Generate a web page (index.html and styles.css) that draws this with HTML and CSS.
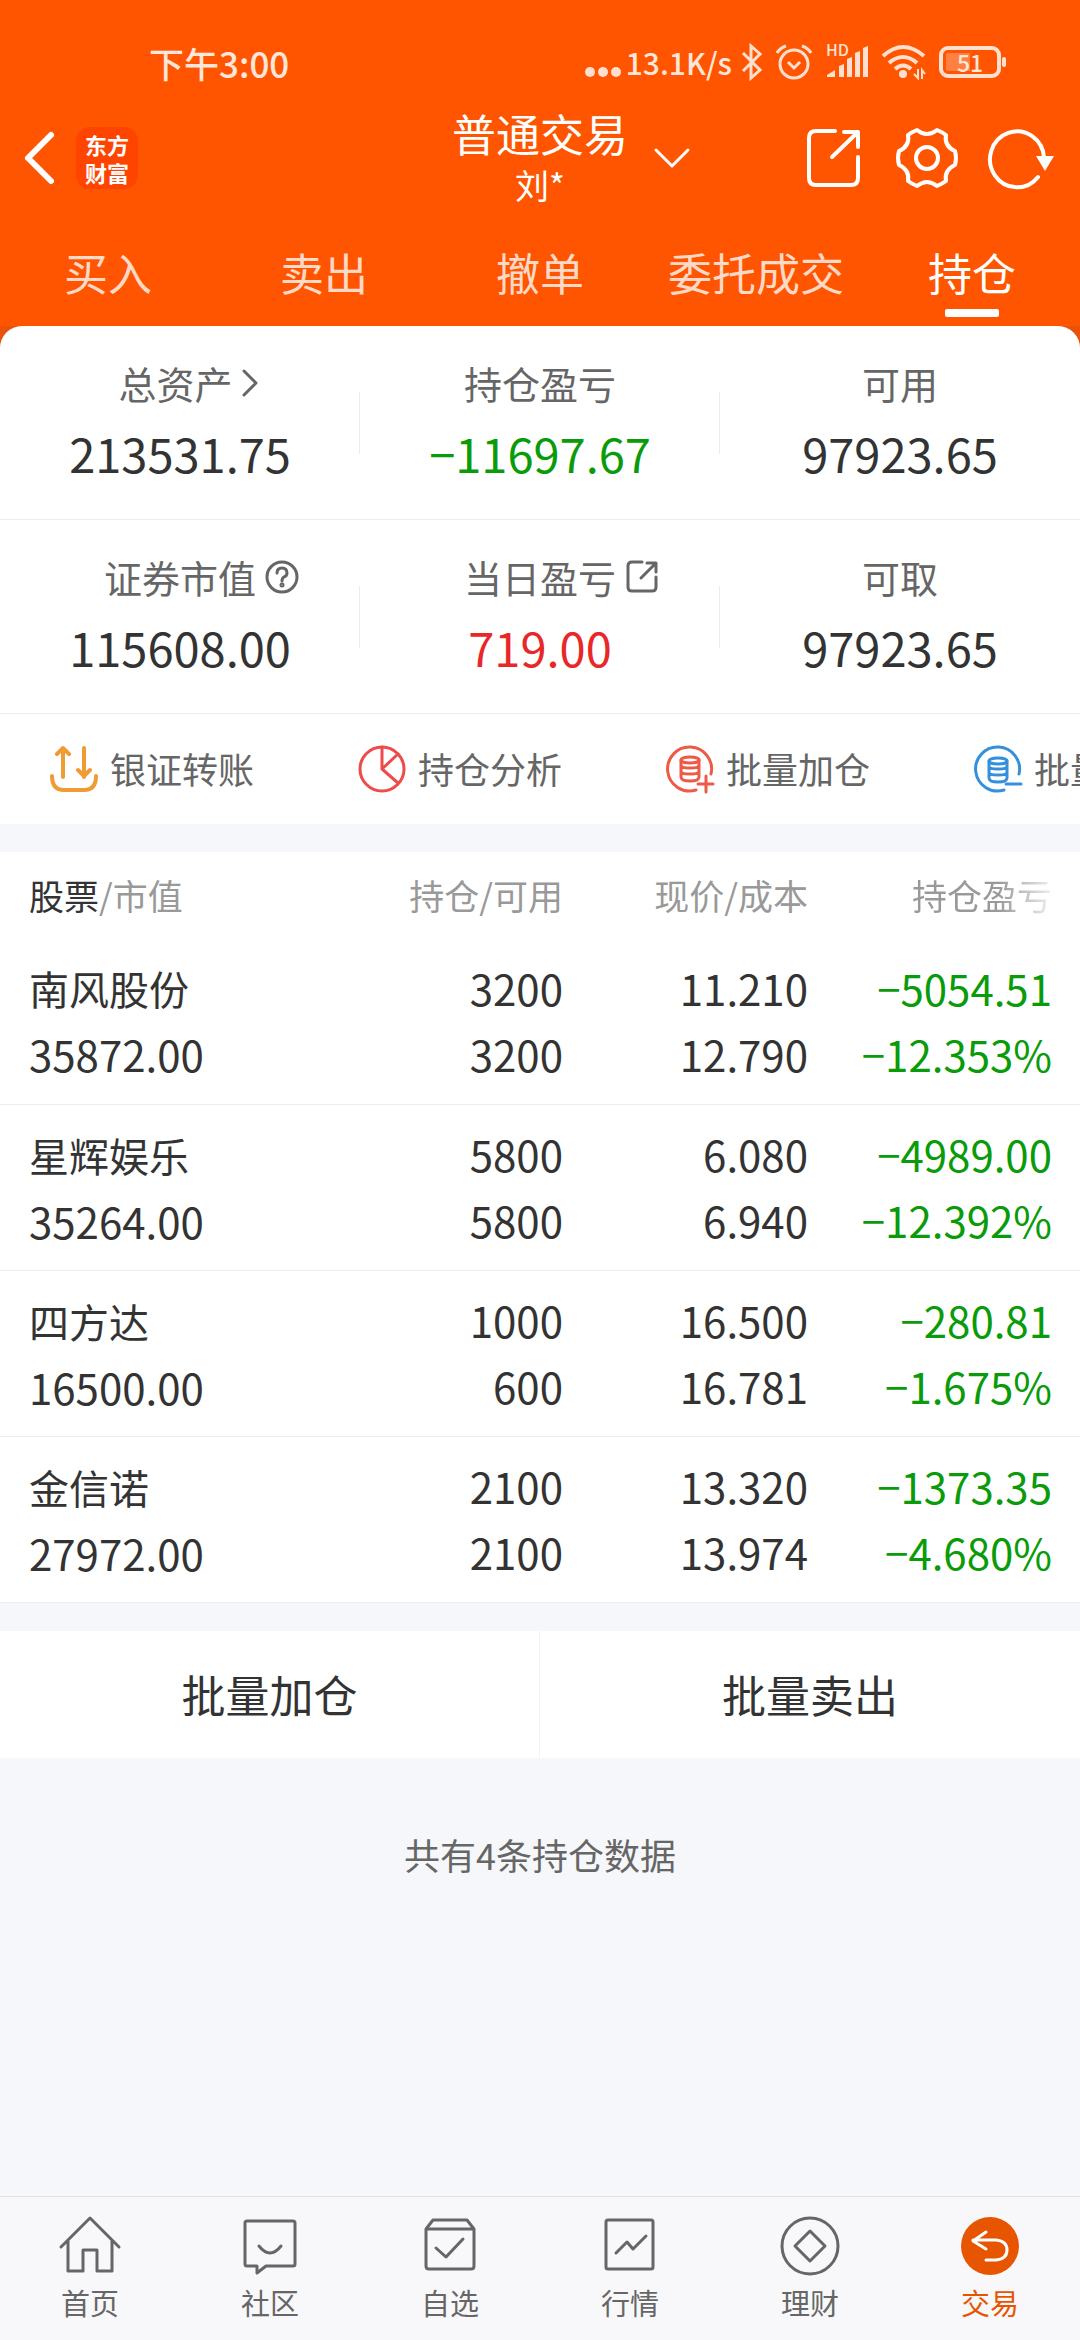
FILE: index.html
```html
<!DOCTYPE html>
<html lang="zh-CN">
<head>
    <meta charset="UTF-8">
    <meta name="viewport" content="width=device-width, initial-scale=1.0">
    <title>普通交易 - 持仓</title>
    <link rel="stylesheet" href="styles.css">
</head>
<body>
    <header class="top">
        <div class="status-bar">
            <span class="clock">下午3:00</span>
            <div class="status-icons">
                <span class="net">
                    <svg width="36" height="10" viewBox="0 0 36 10"><circle cx="5" cy="5" r="5"/><circle cx="18" cy="5" r="5"/><circle cx="31" cy="5" r="5"/></svg>
                    <span>13.1K/s</span>
                </span>
                <svg class="line" width="20" height="36" viewBox="0 0 20 36"><path d="M1 9l17 17-9 8V2l9 8L1 27" stroke-width="3"/></svg>
                <svg class="line" width="36" height="36" viewBox="0 0 36 36"><circle cx="18" cy="20" r="14" stroke-width="3"/><path d="M12 18l6 6 6-6M1 9q3-5 9-7M35 9q-3-5-9-7" stroke-width="3"/></svg>
                <svg width="42" height="36" viewBox="0 0 42 36"><path d="M1 33v-2l8-5v7zM13 22l5-2v13h-5zM21 15l5-2v20h-5zM29 9l5-2v26h-5zM37 4l5-2v31h-5z"/><text x="0" y="12">HD</text></svg>
                <svg class="line" width="43" height="36" viewBox="0 0 43 36"><path d="M1 12q20-18 41 0M7 19q14-12 28 0M13 25q8-7 16 0" stroke-width="4"/><circle cx="21" cy="30" r="4" class="solid"/><path d="M36 25v9l-4-4M40 35v-9l3 4" stroke-width="2"/></svg>
                <span class="battery">51</span>
            </div>
        </div>

        <div class="title-bar">
            <div class="title-left">
                <button class="icon-btn" aria-label="返回">
                    <svg width="32" height="56" viewBox="0 0 32 56"><path d="M26 5L3 28l23 23" stroke-width="6"/></svg>
                </button>
                <a class="logo" href="#">东方<br>财富</a>
            </div>
            <div class="title-text">
                <h1>普通交易</h1>
                <p>刘*</p>
            </div>
            <div class="title-right">
                <button class="icon-btn switch" aria-label="切换账户">
                    <svg width="36" height="20" viewBox="0 0 36 20"><path d="M2 2l16 16L34 2" stroke-width="3"/></svg>
                </button>
                <button class="icon-btn" aria-label="分享">
                    <svg width="64" height="64" viewBox="0 0 64 64"><path d="M32 5H13q-7 0-7 7v40q0 7 7 7h35q7 0 7-7V31M29 31L55 6M41 6h14v15" stroke-width="4"/></svg>
                </button>
                <button class="icon-btn" aria-label="设置">
                    <svg width="64" height="64" viewBox="0 0 64 64"><path d="M22 4Q32 12 42 4Q47 6 51 9Q49 20 60 25Q62 32 60 39Q49 44 51 55Q47 58 42 60Q32 52 22 60Q17 58 13 55Q15 44 4 39Q2 32 4 25Q15 20 13 9Q17 6 22 4Z" stroke-width="4"/><circle cx="32" cy="32" r="11" stroke-width="4"/></svg>
                </button>
                <button class="icon-btn" aria-label="刷新">
                    <svg width="68" height="64" viewBox="0 0 68 64"><path d="M51 51A27 28 0 1 1 57 32" stroke-width="4"/><path d="M49 30h18l-9 15z" class="solid"/></svg>
                </button>
            </div>
        </div>

        <nav class="tabs">
            <a href="#">买入</a>
            <a href="#">卖出</a>
            <a href="#">撤单</a>
            <a href="#">委托成交</a>
            <a href="#" class="active">持仓</a>
        </nav>
    </header>

    <main>
        <section class="sheet">
            <div class="assets">
                <div class="asset">
                    <div class="label">总资产 <svg class="arrow" width="16" height="28" viewBox="0 0 16 28"><path d="M2 2l12 12L2 26"/></svg></div>
                    <div class="value">213531.75</div>
                </div>
                <div class="asset">
                    <div class="label">持仓盈亏</div>
                    <div class="value down">−11697.67</div>
                </div>
                <div class="asset">
                    <div class="label">可用</div>
                    <div class="value">97923.65</div>
                </div>
            </div>
            <div class="assets">
                <div class="asset">
                    <div class="label">证券市值 <svg width="34" height="34" viewBox="0 0 34 34"><circle cx="17" cy="17" r="15"/><path d="M12 13q0-5 5-5t5 5q0 3-3 4-2 1-2 4"/><circle cx="17" cy="25" r="1"/></svg></div>
                    <div class="value">115608.00</div>
                </div>
                <div class="asset">
                    <div class="label">当日盈亏 <svg width="34" height="34" viewBox="0 0 34 34"><path d="M17 2H7Q3 2 3 6v21q0 4 4 4h20q4 0 4-4V17M16 18L31 3M22 3h9v9"/></svg></div>
                    <div class="value up">719.00</div>
                </div>
                <div class="asset">
                    <div class="label">可取</div>
                    <div class="value">97923.65</div>
                </div>
            </div>

            <div class="shortcuts">
                <a href="#">
                    <svg class="gold" width="48" height="48" viewBox="0 0 48 48"><path d="M2 31q0 14 12 14h20q12 0 12-14M13 32V3M7 9l6-6 6 6M34 3v29M28 25l6 6 6-6"/></svg>
                    <span>银证转账</span>
                </a>
                <a href="#">
                    <svg class="red" width="48" height="48" viewBox="0 0 48 48"><circle cx="24" cy="24" r="22"/><path d="M24 2v22L40 9M24 24l16 14"/></svg>
                    <span>持仓分析</span>
                </a>
                <a href="#">
                    <svg class="coral" width="48" height="48" viewBox="0 0 48 48"><path d="M45 29A22 22 0 1 0 30 45M32 39h15M40 31v16"/><path d="M15 15v17q0 4 9 4t9-4V15M15 20q0 3 9 3t9-3M15 26q0 3 9 3t9-3"/><ellipse cx="24" cy="15" rx="9" ry="3"/></svg>
                    <span>批量加仓</span>
                </a>
                <a href="#">
                    <svg class="blue" width="48" height="48" viewBox="0 0 48 48"><path d="M45 29A22 22 0 1 0 30 45M32 39h15"/><path d="M15 16v17q0 4 9 4t9-4V16M15 21q0 3 9 3t9-3M15 27q0 3 9 3t9-3"/><ellipse cx="24" cy="16" rx="9" ry="3"/></svg>
                    <span>批量卖出</span>
                </a>
            </div>
        </section>

        <table class="holdings">
            <thead>
                <tr>
                    <th class="stock"><b>股票</b>/市值</th>
                    <th class="amount">持仓/可用</th>
                    <th class="price">现价/成本</th>
                    <th class="profit">持仓盈亏</th>
                </tr>
            </thead>
            <tbody>
                <tr>
                    <td><span class="name">南风股份</span><br>35872.00</td>
                    <td>3200<br>3200</td>
                    <td>11.210<br>12.790</td>
                    <td class="down">−5054.51<br>−12.353%</td>
                </tr>
                <tr>
                    <td><span class="name">星辉娱乐</span><br>35264.00</td>
                    <td>5800<br>5800</td>
                    <td>6.080<br>6.940</td>
                    <td class="down">−4989.00<br>−12.392%</td>
                </tr>
                <tr>
                    <td><span class="name">四方达</span><br>16500.00</td>
                    <td>1000<br>600</td>
                    <td>16.500<br>16.781</td>
                    <td class="down">−280.81<br>−1.675%</td>
                </tr>
                <tr>
                    <td><span class="name">金信诺</span><br>27972.00</td>
                    <td>2100<br>2100</td>
                    <td>13.320<br>13.974</td>
                    <td class="down">−1373.35<br>−4.680%</td>
                </tr>
            </tbody>
        </table>

        <div class="batch">
            <button>批量加仓</button>
            <button>批量卖出</button>
        </div>
        <p class="total">共有4条持仓数据</p>
    </main>

    <nav class="bottom-nav">
        <a href="#">
            <svg width="60" height="60" viewBox="0 0 60 60"><path d="M1 31L30 2l29 29M8 25v30h15V34h14v21h15V25"/></svg>
            <span>首页</span>
        </a>
        <a href="#">
            <svg width="60" height="60" viewBox="0 0 60 60"><path d="M7 5h46q2 0 2 2v41q0 2-2 2H26l-9 7v-7H7q-2 0-2-2V7q0-2 2-2z"/><path d="M19 30q11 14 22 0" stroke-width="3"/></svg>
            <span>社区</span>
        </a>
        <a href="#">
            <svg width="60" height="60" viewBox="0 0 60 60"><path d="M6 13l7-9h34l7 9v37q0 3-3 3H9q-3 0-3-3zM6 13h48M16 32l10 9 17-18"/></svg>
            <span>自选</span>
        </a>
        <a href="#">
            <svg width="60" height="60" viewBox="0 0 60 60"><rect x="6" y="4" width="47" height="49" rx="2"/><path d="M16 37l11-11 6 7 13-13"/></svg>
            <span>行情</span>
        </a>
        <a href="#">
            <svg width="60" height="60" viewBox="0 0 60 60"><circle cx="30" cy="30" r="28"/><path d="M30 15l15 15-15 15-15-15z"/></svg>
            <span>理财</span>
        </a>
        <a href="#" class="active">
            <svg width="60" height="60" viewBox="0 0 60 60"><circle cx="30" cy="30" r="29"/><path d="M26 16L13 25l13 8M13 24h23q11 1 11 10t-11 10H26"/></svg>
            <span>交易</span>
        </a>
    </nav>
</body>
</html>
```
FILE: styles.css
```css
* {
    box-sizing: border-box;
}

body {
    margin: 0;
    min-height: 100vh;
    display: flex;
    flex-direction: column;
    background-color: #f6f7fa;
    color: #333;
    font-family: "Noto Sans CJK SC", sans-serif;
    overflow-x: hidden;
}

h1,
p {
    margin: 0;
    font-weight: 400;
}

a {
    color: inherit;
    text-decoration: none;
}

button {
    padding: 0;
    border: none;
    background: none;
    color: inherit;
    font-family: inherit;
}

svg {
    display: block;
    flex-shrink: 0;
    overflow: visible;
}

.up {
    color: #e82828;
}

.down {
    color: #0a9b0a;
}

/* header */
.top {
    background-color: #ff5500;
    color: #fff;
    padding-top: 38px;
}

.status-bar {
    display: flex;
    justify-content: space-between;
    align-items: center;
    height: 48px;
    padding: 0 73px 0 149px;
    color: #ffe6da;
    font-weight: 500;
}

.clock {
    font-size: 35px;
}

.status-icons {
    display: flex;
    align-items: center;
    gap: 14px;
}

.status-icons svg {
    fill: #ffe0d0;
}

.status-icons .line {
    fill: none;
    stroke: #ffe0d0;
}

.status-icons .solid {
    fill: #ffe0d0;
    stroke: none;
}

.status-icons text {
    font-size: 16px;
}

.net {
    display: flex;
    align-items: center;
    gap: 5px;
    margin-right: -4px;
    font-size: 30px;
}

.net svg {
    margin-top: 20px;
}

.battery {
    position: relative;
    width: 62px;
    height: 32px;
    margin-right: 6px;
    border: 4px solid #ffe0d0;
    border-radius: 9px;
    background: linear-gradient(to right, #ff8040 50%, transparent 50%) content-box;
    padding: 3px;
    font-size: 23px;
    line-height: 18px;
    text-align: center;
}

.battery::after {
    content: "";
    position: absolute;
    top: 7px;
    right: -9px;
    width: 4px;
    height: 10px;
    border-radius: 2px;
    background-color: #ffe0d0;
}

.title-bar {
    display: grid;
    grid-template-columns: 1fr auto 1fr;
    align-items: center;
    height: 144px;
    padding: 0 25px;
}

.title-left,
.title-right {
    display: flex;
    align-items: center;
}

.title-left {
    gap: 19px;
}

.title-right {
    gap: 28px;
}

.icon-btn svg {
    fill: none;
    stroke: #fff;
    stroke-linecap: round;
    stroke-linejoin: round;
}

.icon-btn .solid {
    fill: #fff;
    stroke: none;
}

.switch {
    margin: 0 auto 0 26px;
}

.logo {
    width: 62px;
    height: 62px;
    padding-top: 3px;
    border-radius: 14px;
    background-color: #ff4400;
    font-size: 22px;
    font-weight: 700;
    line-height: 28px;
    text-align: center;
}

.title-text {
    text-align: center;
}

.title-text h1 {
    font-size: 44px;
    line-height: 54px;
}

.title-text p {
    font-size: 34px;
    line-height: 50px;
}

.tabs {
    display: grid;
    grid-template-columns: repeat(5, 1fr);
    height: 96px;
}

.tabs a {
    display: flex;
    flex-direction: column;
    align-items: center;
    padding-top: 12px;
    color: #ffd9c7;
    font-size: 44px;
    line-height: 60px;
}

.tabs .active {
    color: #fff;
}

.tabs .active::after {
    content: "";
    width: 54px;
    height: 8px;
    margin-top: 7px;
    border-radius: 2px;
    background-color: #fff;
}

/* asset summary */
main {
    flex: 1;
    background: linear-gradient(#e8520a, #e8520a) top / 100% 24px no-repeat;
}

.sheet {
    background-color: #fff;
    border-radius: 22px 22px 0 0;
    overflow: hidden;
}

.assets {
    display: grid;
    grid-template-columns: repeat(3, 1fr);
    padding: 30px 0 33px;
    border-bottom: 1px solid #ececec;
    text-align: center;
}

.asset {
    background: linear-gradient(#ececec, #ececec) right 36px / 1px 62px no-repeat;
}

.asset:last-child {
    background: none;
}

.label {
    display: flex;
    justify-content: center;
    align-items: center;
    gap: 9px;
    color: #666;
    font-size: 38px;
    line-height: 54px;
}

/* the icon hangs to the right so the text stays centred */
.label svg {
    margin-right: -43px;
    fill: none;
    stroke: #666;
    stroke-width: 3;
    stroke-linecap: round;
    stroke-linejoin: round;
}

.label .arrow {
    margin-right: -16px;
}

.value {
    margin-top: 10px;
    font-size: 47px;
    line-height: 66px;
}

.shortcuts {
    display: grid;
    grid-auto-flow: column;
    grid-auto-columns: 308px;
    height: 110px;
    padding-left: 50px;
    overflow: hidden;
}

.shortcuts a {
    display: flex;
    align-items: center;
    gap: 12px;
    color: #666;
    font-size: 36px;
    line-height: 52px;
    white-space: nowrap;
}

.shortcuts span {
    padding-bottom: 2px;
}

.shortcuts svg {
    fill: none;
    stroke-width: 3;
    stroke-linecap: round;
    stroke-linejoin: round;
}

.shortcuts .gold {
    stroke: #f09c35;
    stroke-width: 4;
}

.red {
    stroke: #ee4b4b;
}

.coral {
    stroke: #ee5a45;
}

.blue {
    stroke: #3490dc;
}

/* holdings */
.holdings {
    width: 100%;
    margin: 28px 0;
    border-collapse: collapse;
    table-layout: fixed;
    background-color: #fff;
}

.holdings th,
.holdings td {
    padding: 0;
    text-align: right;
    white-space: nowrap;
}

.holdings th:first-child,
.holdings td:first-child {
    padding-left: 29px;
    text-align: left;
}

.holdings th:last-child,
.holdings td:last-child {
    padding-right: 28px;
}

.holdings th {
    height: 86px;
    padding-bottom: 2px;
    color: #999;
    font-size: 35px;
    font-weight: 400;
}

.holdings b {
    color: #333;
    font-weight: 400;
}

.amount {
    width: 239px;
}

.price {
    width: 245px;
}

.profit {
    width: 272px;
}

/* the last heading fades out towards the edge */
.holdings .profit {
    color: transparent;
    background: linear-gradient(to right, #999 190px, #fff 254px) text;
}

.holdings td {
    height: 166px;
    border-bottom: 1px solid #ececec;
    font-size: 42px;
    line-height: 66px;
}

.name {
    font-size: 40px;
}

.batch {
    display: grid;
    grid-template-columns: 1fr 1fr;
    height: 127px;
    background-color: #fff;
}

.batch button {
    font-size: 44px;
}

.batch button:first-child {
    border-right: 1px solid #f4f4f4;
}

.total {
    padding: 69px 0;
    color: #666;
    font-size: 36px;
    line-height: 54px;
    text-align: center;
}

/* bottom nav */
.bottom-nav {
    display: grid;
    grid-template-columns: repeat(6, 1fr);
    height: 144px;
    border-top: 1px solid #e0e0e0;
    background-color: #f8f8fa;
}

.bottom-nav a {
    display: flex;
    flex-direction: column;
    align-items: center;
    gap: 4px;
    padding-top: 19px;
    color: #666;
    font-size: 29px;
    line-height: 44px;
}

.bottom-nav svg {
    fill: none;
    stroke: #666;
    stroke-width: 3;
    stroke-linejoin: round;
    stroke-linecap: round;
}

.bottom-nav .active {
    color: #e85500;
}

.bottom-nav .active circle {
    fill: #e85500;
    stroke: none;
}

.bottom-nav .active path {
    stroke: #fff;
}
```
